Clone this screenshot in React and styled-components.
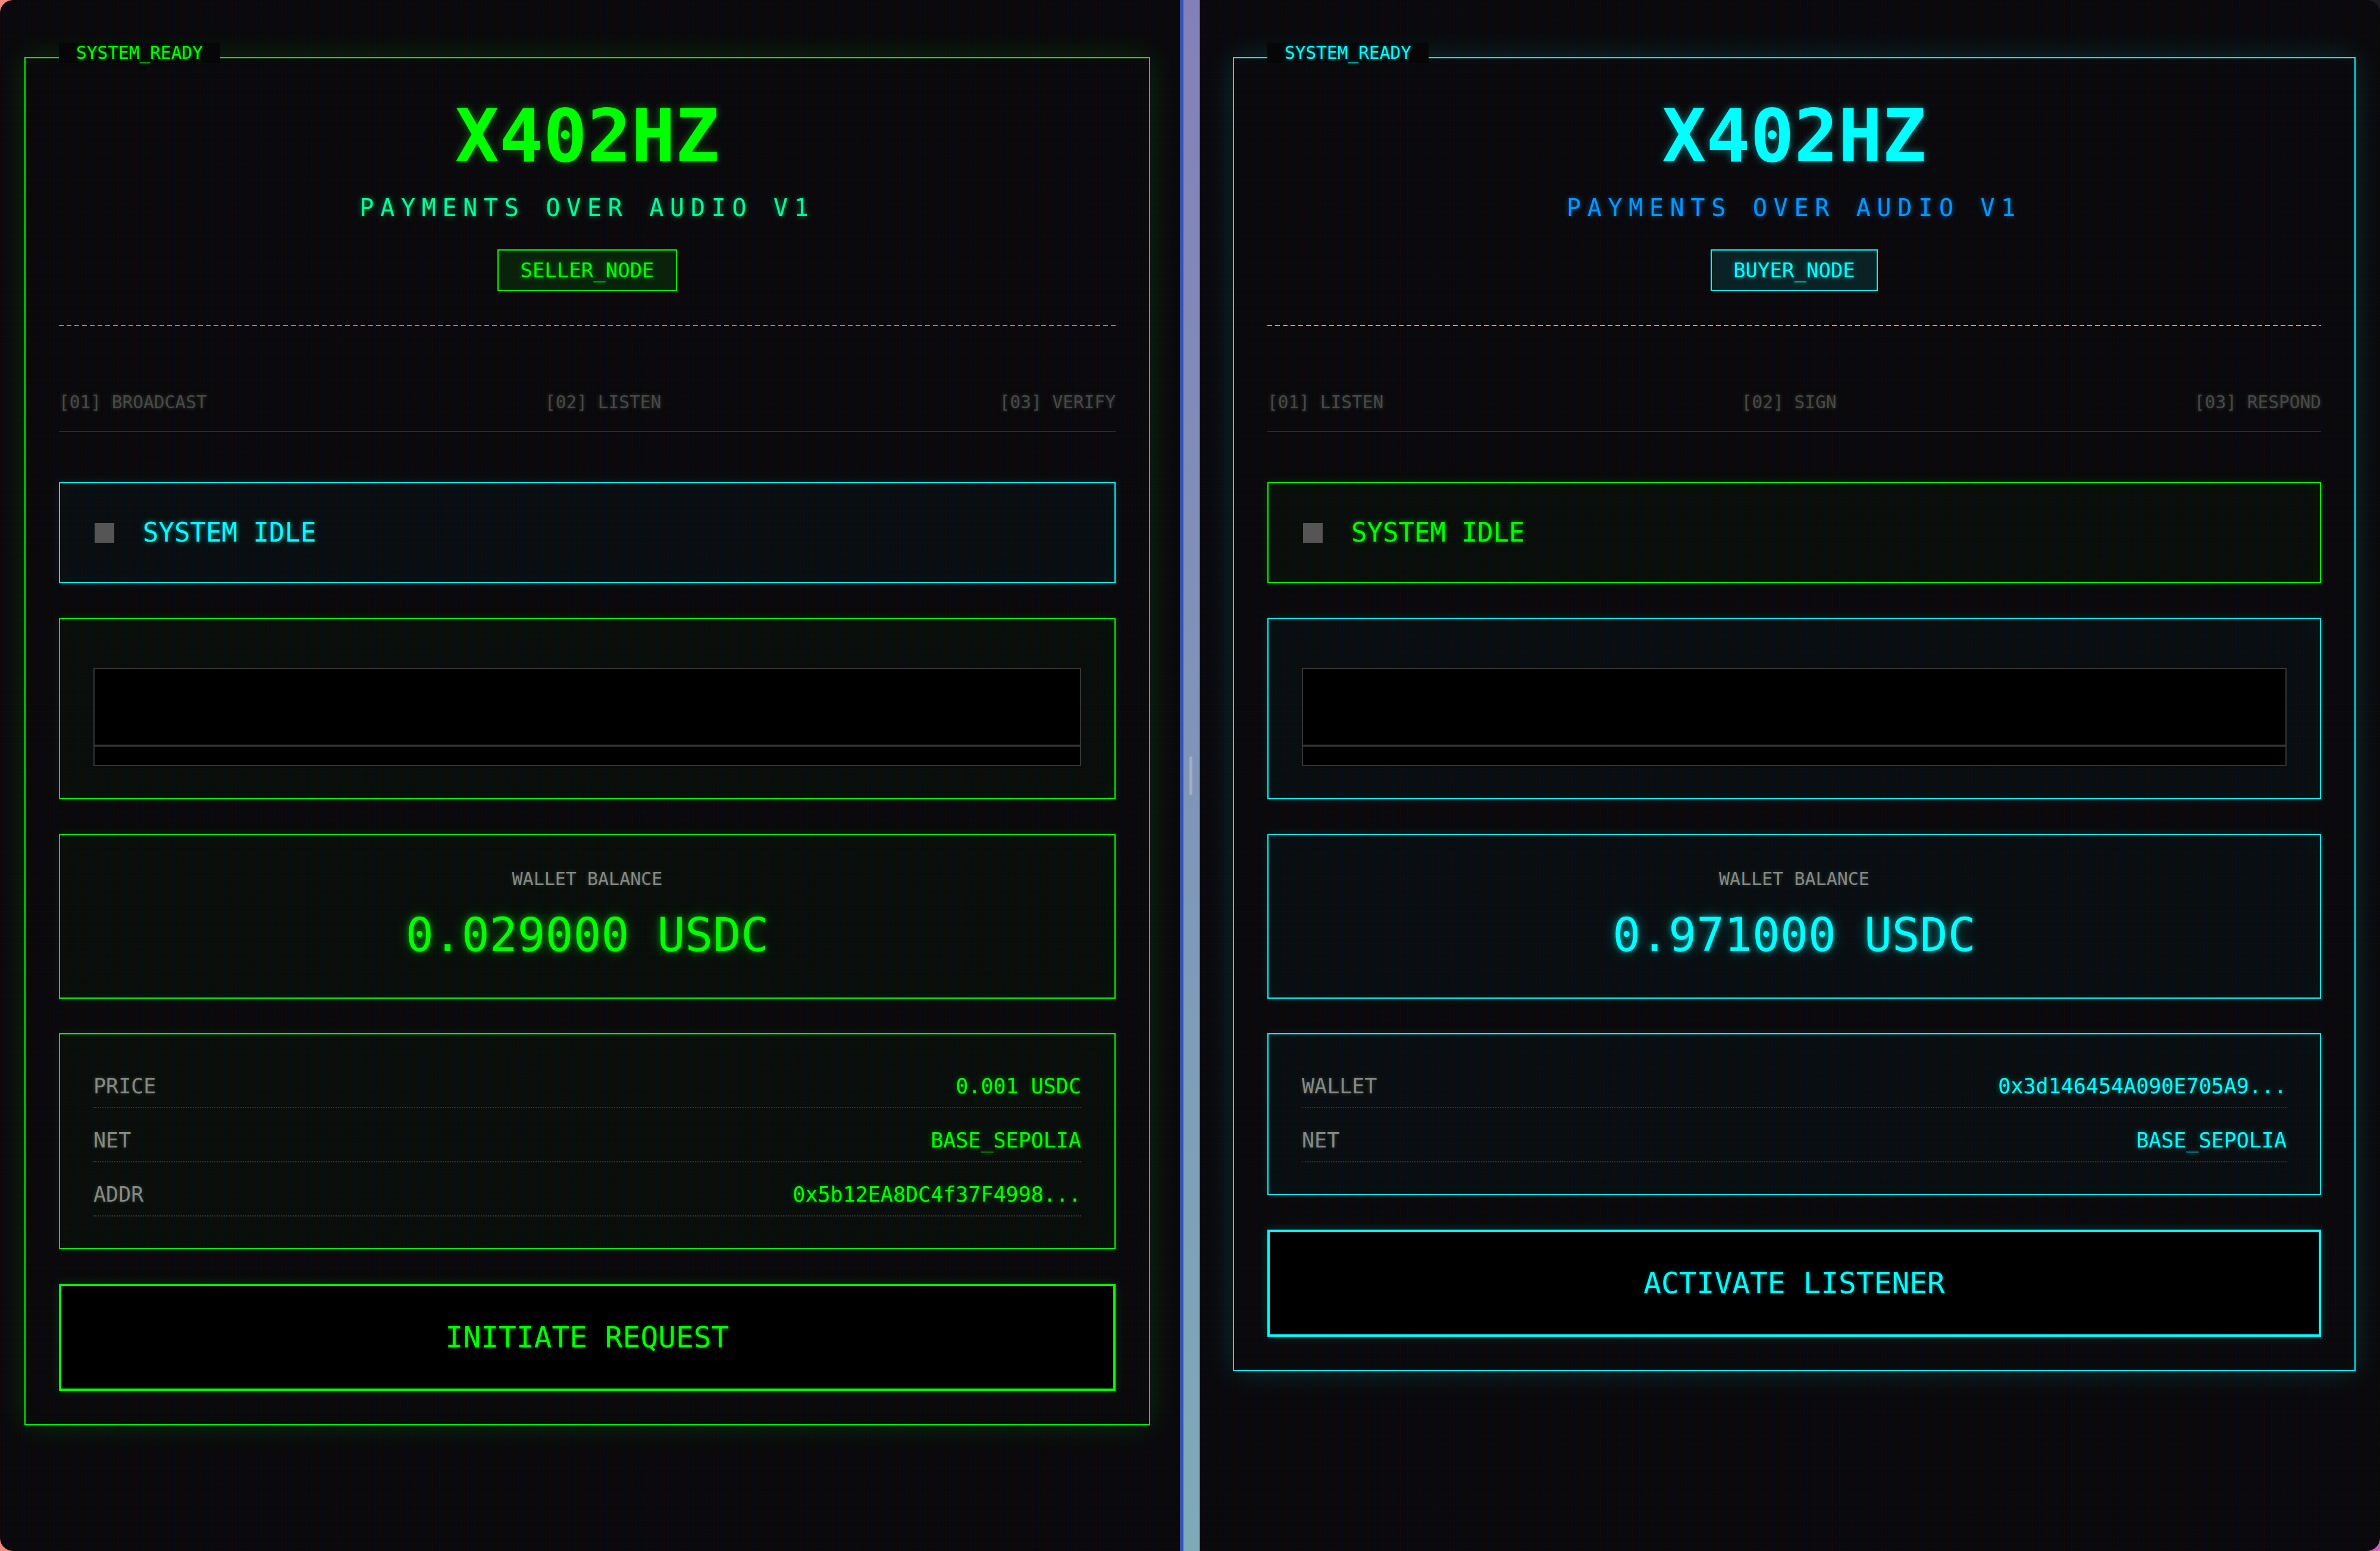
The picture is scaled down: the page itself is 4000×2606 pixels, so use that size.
import React from 'react';
import styled, { createGlobalStyle } from 'styled-components';

const GlobalStyle = createGlobalStyle`
  html, body {
    margin: 0;
    padding: 0;
    background: #1c1c20;
  }
  body {
    width: 4000px;
    height: 2606px;
    overflow: hidden;
    font-family: "DejaVu Sans Mono", "Liberation Mono", monospace;
  }
`;

const PANELS = [
  {
    id: 'seller',
    side: 'left',
    padLeft: 41,
    padRight: 50,
    accent: '#00ff00',
    accentRgb: '0, 255, 0',
    sub: '#00ff99',
    subRgb: '0, 255, 153',
    alt: '#00ffff',
    altRgb: '0, 255, 255',
    node: 'SELLER_NODE',
    steps: ['[01] BROADCAST', '[02] LISTEN', '[03] VERIFY'],
    balance: '0.029000 USDC',
    rows: [
      ['PRICE', '0.001 USDC'],
      ['NET', 'BASE_SEPOLIA'],
      ['ADDR', '0x5b12EA8DC4f37F4998...'],
    ],
    action: 'INITIATE REQUEST',
  },
  {
    id: 'buyer',
    side: 'right',
    padLeft: 55,
    padRight: 41,
    accent: '#00ffff',
    accentRgb: '0, 255, 255',
    sub: '#0099ff',
    subRgb: '0, 153, 255',
    alt: '#00ff00',
    altRgb: '0, 255, 0',
    node: 'BUYER_NODE',
    steps: ['[01] LISTEN', '[02] SIGN', '[03] RESPOND'],
    balance: '0.971000 USDC',
    rows: [
      ['WALLET', '0x3d146454A090E705A9...'],
      ['NET', 'BASE_SEPOLIA'],
    ],
    action: 'ACTIVATE LISTENER',
  },
];

const Desktop = styled.div`
  width: 4000px;
  height: 2606px;
  display: flex;
  background:
    linear-gradient(to right, #f28a7e 0 50%, transparent 50%),
    linear-gradient(to bottom, #1c1c20 0 50%, #d062b8 50%);
`;

const Window = styled.section`
  width: 1983px;
  height: 100%;
  box-sizing: border-box;
  padding: 96px ${({ $padRight }) => $padRight}px 0 ${({ $padLeft }) => $padLeft}px;
  border-radius: ${({ $side }) => ($side === 'left' ? '22px 0 0 22px' : '0 22px 22px 0')};
  background-color: #060608;
  background-image:
    repeating-linear-gradient(
      90deg,
      rgba(255, 40, 40, 0.035) 0 2px,
      rgba(40, 255, 40, 0.012) 2px 4px,
      rgba(40, 60, 255, 0.035) 4px 6px
    ),
    repeating-linear-gradient(0deg, rgba(255, 255, 255, 0.012) 0 1px, transparent 1px 3px);
  overflow: hidden;
`;

const Divider = styled.div`
  width: 34px;
  height: 100%;
  box-sizing: border-box;
  display: flex;
  align-items: center;
  justify-content: center;
  border-right: 1px solid #4a4e5c;
  background:
    linear-gradient(90deg, #3352b4 0 6px, transparent 6px),
    linear-gradient(180deg, #8380b9 0%, #7f95b8 50%, #7eaab8 100%);
`;

const Grabber = styled.span`
  width: 5px;
  height: 65px;
  margin-left: 4px;
  border-radius: 3px;
  background: #a7abc9;
`;

const Frame = styled.div`
  position: relative;
  display: flex;
  flex-direction: column;
  padding: 69px 56px 56px;
  border: 2px solid ${({ $accent }) => $accent};
  box-shadow:
    0 0 46px rgba(${({ $rgb }) => $rgb}, 0.16),
    inset 0 0 30px rgba(${({ $rgb }) => $rgb}, 0.03);
`;

const Legend = styled.span`
  position: absolute;
  top: -26px;
  left: 56px;
  padding: 2px 29px;
  background: #060608;
  color: ${({ $accent }) => $accent};
  font-size: 29.5px;
  line-height: 30px;
  text-shadow: 0 0 6px rgba(${({ $rgb }) => $rgb}, 0.5);
`;

/* dashed rule under the header */
const Header = styled.header`
  display: flex;
  flex-direction: column;
  align-items: center;
  padding-bottom: 59px;
  background: repeating-linear-gradient(
      90deg,
      ${({ $accent }) => $accent} 0 8px,
      transparent 8px 13px
    )
    left bottom / 100% 2px no-repeat;
`;

const Title = styled.h1`
  margin: 0;
  font-size: 123px;
  line-height: 123px;
  font-weight: bold;
  color: ${({ $accent }) => $accent};
  text-shadow: 0 0 14px rgba(${({ $rgb }) => $rgb}, 0.45);
`;

const Subtitle = styled.p`
  margin: 39px 0 0;
  font-size: 40px;
  line-height: 40px;
  letter-spacing: 10.7px;
  color: ${({ $color }) => $color};
  text-shadow: 0 0 10px rgba(${({ $rgb }) => $rgb}, 0.55);
`;

const Badge = styled.span`
  margin-top: 50px;
  padding: 16px 36px;
  font-size: 34px;
  line-height: 34px;
  color: ${({ $accent }) => $accent};
  border: 2px solid ${({ $accent }) => $accent};
  background: rgba(${({ $rgb }) => $rgb}, 0.1);
  text-shadow: 0 0 8px rgba(${({ $rgb }) => $rgb}, 0.55);
`;

const Steps = styled.ol`
  list-style: none;
  margin: 113px 0 0;
  padding: 0 0 33px;
  display: flex;
  justify-content: space-between;
  border-bottom: 2px solid #29292b;
`;

const Step = styled.li`
  font-size: 29.5px;
  line-height: 30px;
  color: #474a47;
  text-shadow: 0 0 7px rgba(90, 100, 90, 0.55);
`;

const Body = styled.div`
  display: flex;
  flex-direction: column;
  gap: 58px;
  margin-top: 84px;
`;

const Box = styled.div`
  border: 2px solid ${({ $accent }) => $accent};
  background: rgba(${({ $rgb }) => $rgb}, 0.025);
  box-shadow:
    0 0 14px rgba(${({ $rgb }) => $rgb}, 0.12),
    inset 0 0 40px rgba(${({ $rgb }) => $rgb}, 0.03);
`;

const StatusBox = styled(Box)`
  display: flex;
  align-items: center;
  gap: 48px;
  padding: 61px 56px;
`;

const Indicator = styled.span`
  width: 33px;
  height: 33px;
  margin-left: 2px;
  background: #555;
`;

const StatusText = styled.span`
  font-size: 44px;
  line-height: 44px;
  color: ${({ $accent }) => $accent};
  text-shadow: 0 0 9px rgba(${({ $rgb }) => $rgb}, 0.6);
`;

const ScopeBox = styled(Box)`
  padding: 82px 56px 54px;
`;

const Scope = styled.div`
  display: flex;
  flex-direction: column;
  height: 165px;
  box-sizing: border-box;
  border: 2px solid #353535;
  background: #000;
`;

const Wave = styled.div`
  height: 127px;
`;

const ScopeLine = styled.div`
  height: 4px;
  background: linear-gradient(180deg, #1e1e1e, #3c3c3c, #1e1e1e);
`;

const WalletBox = styled(Box)`
  display: flex;
  flex-direction: column;
  align-items: center;
  padding: 59px 56px 66px;
`;

const Caption = styled.span`
  font-size: 30px;
  line-height: 30px;
  color: #858a85;
  text-shadow: 0 0 6px rgba(130, 140, 130, 0.4);
`;

const Balance = styled.span`
  margin-top: 40px;
  font-size: 78px;
  line-height: 78px;
  color: ${({ $accent }) => $accent};
  text-shadow:
    0 0 10px rgba(${({ $rgb }) => $rgb}, 0.6),
    0 0 24px rgba(${({ $rgb }) => $rgb}, 0.35);
`;

const InfoBox = styled(Box)`
  padding: 33px 56px 53px;
`;

const Row = styled.div`
  display: flex;
  justify-content: space-between;
  align-items: center;
  padding: 34px 0 15px;
  border-bottom: 2px dotted #363836;
  font-size: 35px;
  line-height: 40px;
`;

const RowLabel = styled.span`
  color: #858a85;
  text-shadow: 0 0 6px rgba(130, 140, 130, 0.4);
`;

const RowValue = styled.span`
  color: ${({ $accent }) => $accent};
  text-shadow: 0 0 8px rgba(${({ $rgb }) => $rgb}, 0.5);
`;

const Action = styled.button`
  height: 180px;
  border: 4px solid ${({ $accent }) => $accent};
  background: #000;
  color: ${({ $accent }) => $accent};
  font-family: inherit;
  font-size: 49.5px;
  line-height: 50px;
  cursor: pointer;
  box-shadow: 0 0 16px rgba(${({ $rgb }) => $rgb}, 0.18);
  text-shadow: 0 0 6px rgba(${({ $rgb }) => $rgb}, 0.35);
`;

const NodePanel = ({ panel }) => {
  const { accent, accentRgb, alt, altRgb } = panel;
  return (
    <Window $side={panel.side} $padLeft={panel.padLeft} $padRight={panel.padRight}>
      <Frame $accent={accent} $rgb={accentRgb}>
        <Legend $accent={accent} $rgb={accentRgb}>SYSTEM_READY</Legend>
        <Header $accent={accent}>
          <Title $accent={accent} $rgb={accentRgb}>X402HZ</Title>
          <Subtitle $color={panel.sub} $rgb={panel.subRgb}>PAYMENTS OVER AUDIO V1</Subtitle>
          <Badge $accent={accent} $rgb={accentRgb}>{panel.node}</Badge>
        </Header>

        <Steps>
          {panel.steps.map((step) => (
            <Step key={step}>{step}</Step>
          ))}
        </Steps>

        <Body>
          <StatusBox $accent={alt} $rgb={altRgb}>
            <Indicator />
            <StatusText $accent={alt} $rgb={altRgb}>SYSTEM IDLE</StatusText>
          </StatusBox>

          <ScopeBox $accent={accent} $rgb={accentRgb}>
            <Scope>
              <Wave />
              <ScopeLine />
            </Scope>
          </ScopeBox>

          <WalletBox $accent={accent} $rgb={accentRgb}>
            <Caption>WALLET BALANCE</Caption>
            <Balance $accent={accent} $rgb={accentRgb}>{panel.balance}</Balance>
          </WalletBox>

          <InfoBox $accent={accent} $rgb={accentRgb}>
            {panel.rows.map(([label, value]) => (
              <Row key={label}>
                <RowLabel>{label}</RowLabel>
                <RowValue $accent={accent} $rgb={accentRgb}>{value}</RowValue>
              </Row>
            ))}
          </InfoBox>

          <Action $accent={accent} $rgb={accentRgb}>{panel.action}</Action>
        </Body>
      </Frame>
    </Window>
  );
};

const App = () => (
  <>
    <GlobalStyle />
    <Desktop>
      <NodePanel panel={PANELS[0]} />
      <Divider>
        <Grabber />
      </Divider>
      <NodePanel panel={PANELS[1]} />
    </Desktop>
  </>
);

export default App;
